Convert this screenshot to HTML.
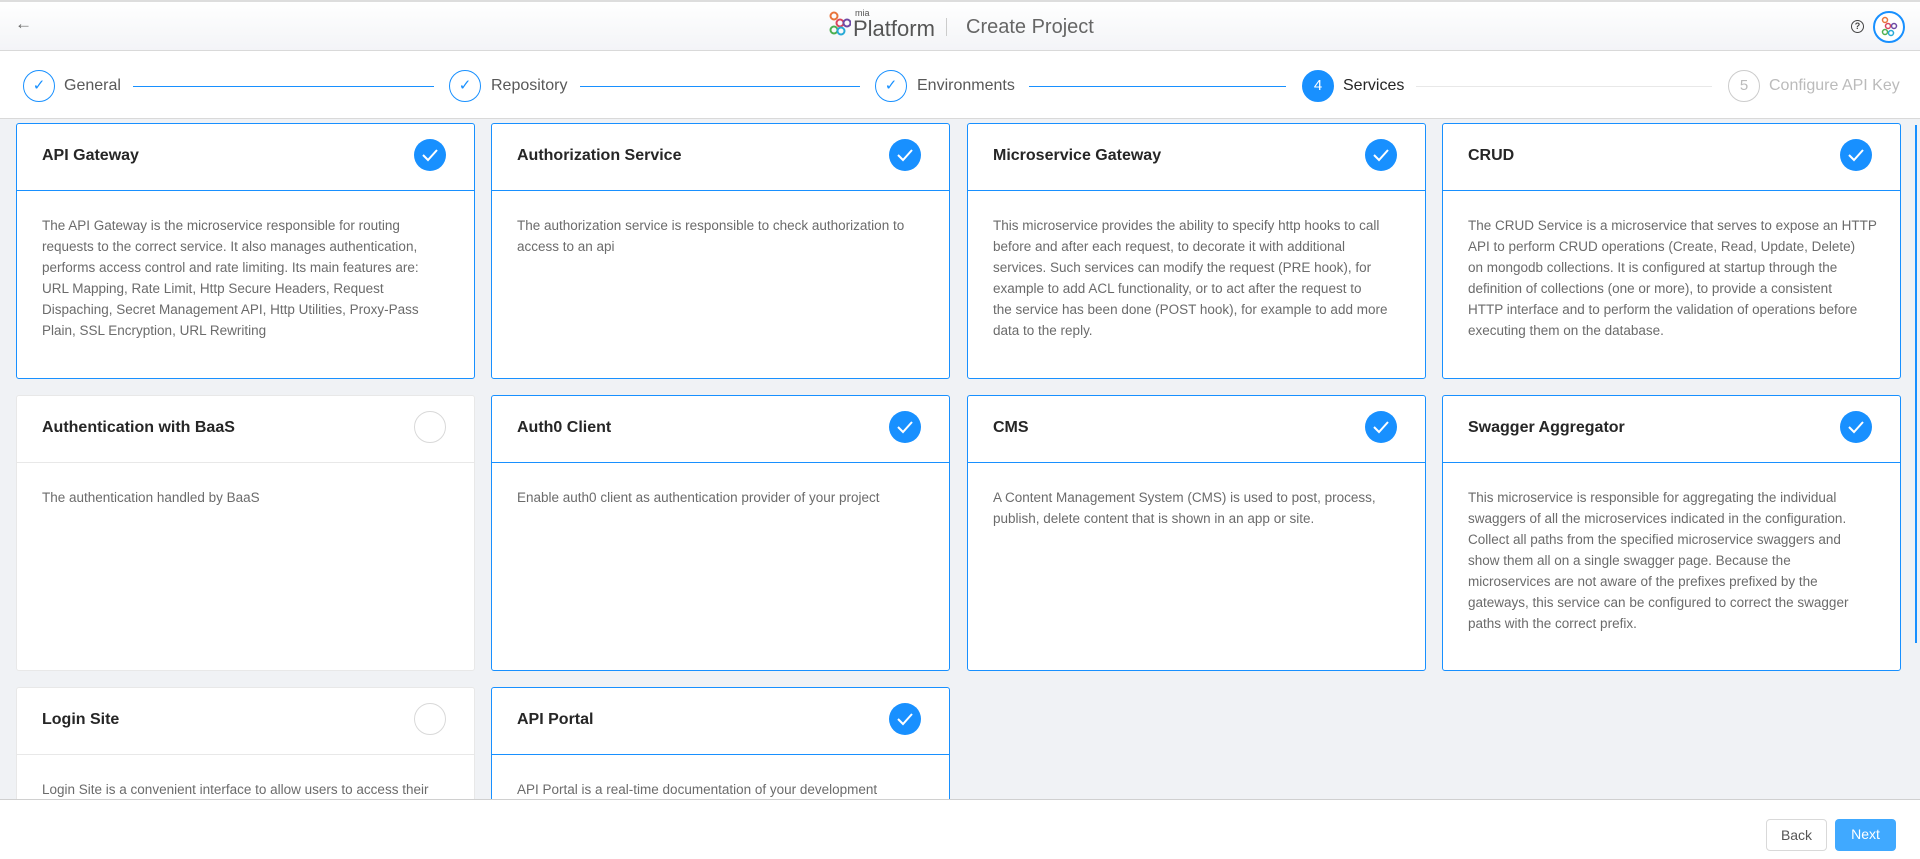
<!DOCTYPE html>
<html style="overflow:hidden;width:1920px;height:859px"><head><meta charset="utf-8"><style>
*{box-sizing:border-box;margin:0;padding:0}
body{width:1920px;height:859px;overflow:hidden;background:#f0f2f5;font-family:"Liberation Sans",sans-serif;position:relative}
.top{position:absolute;left:0;top:0;width:1920px;height:51px;background:linear-gradient(#fff,#f3f4f7);border-top:2px solid #ddd;border-bottom:1px solid #d9d9d9}
.steps{position:absolute;left:0;top:51px;width:1920px;height:68px;background:#fff;border-bottom:1px solid #d9d9d9}
.circ{position:absolute;width:32px;height:32px;border-radius:50%;border:1.5px solid #1890ff;top:19px;color:#1890ff;text-align:center;line-height:29px;font-size:15px}
.lbl{position:absolute;top:26px;font-size:16px;color:#595959}
.ln{position:absolute;top:35px;height:1px;background:#1890ff}
.clip{position:absolute;left:0;top:119px;width:1920px;height:680px;overflow:hidden}
.card{position:absolute;width:459px;background:#fff;border:1px solid #1890ff;border-radius:3px;overflow:hidden}
.card.off{border-color:#e8e8e8}
.hd{height:67px;border-bottom:1px solid #1890ff;position:relative;padding:23px 0 0 25px;font-size:16px;color:#262626;font-weight:bold}
.off .hd{border-bottom-color:#e8e8e8}
.ck{position:absolute;right:28px;top:15px;width:32px;height:32px;border-radius:50%;background:#1890ff}
.ck svg{position:absolute;left:7px;top:8px}
.off .ck{background:#fff;border:1px solid #d9d9d9}
.bd{padding:24px 25px;font-size:13.5px;line-height:21px;color:#6b6b6b;white-space:nowrap}
.foot{position:absolute;left:0;top:799px;width:1920px;height:60px;background:#fff;border-top:1px solid #d0d0d0;z-index:5}
.btn{position:absolute;top:19px;height:32px;border-radius:4px;font-size:14px;text-align:center;line-height:30px}
</style></head><body>
<div class="top">
 <div style="position:absolute;left:15px;top:12px;font-size:17px;color:#666">&#8592;</div>
 <svg style="position:absolute;left:829px;top:9px" width="22" height="26" viewBox="0 0 22 26"><circle cx="5" cy="5" r="3.5" fill="none" stroke="#e8743b" stroke-width="2"/><circle cx="11" cy="12" r="3.5" fill="none" stroke="#d9455f" stroke-width="2"/><circle cx="18" cy="12" r="3.5" fill="none" stroke="#6d4aa5" stroke-width="2"/><circle cx="5" cy="19" r="3.5" fill="none" stroke="#4caf50" stroke-width="2"/><circle cx="12" cy="20" r="3.5" fill="none" stroke="#26a9d6" stroke-width="2"/></svg>
 <div style="position:absolute;left:855px;top:6px;font-size:9px;color:#555">mia</div>
 <div style="position:absolute;left:853px;top:14px;font-size:22px;color:#555">Platform</div>
 <div style="position:absolute;left:946px;top:16px;width:1px;height:18px;background:#ccc"></div>
 <div style="position:absolute;left:966px;top:14px;font-size:20px;color:#666">Create Project</div>
 <div style="position:absolute;left:1851px;top:18px;width:13px;height:13px;border:1.5px solid #444;border-radius:50%;font-size:9px;text-align:center;line-height:10px;color:#444;font-weight:bold">?</div>
 <svg style="position:absolute;left:1873px;top:9px" width="32" height="32" viewBox="0 0 32 32"><circle cx="16" cy="16" r="15" fill="#fff" stroke="#1890ff" stroke-width="2"/><circle cx="12" cy="9" r="2.5" fill="none" stroke="#e8743b" stroke-width="1.5"/><circle cx="15" cy="15" r="2.5" fill="none" stroke="#d9455f" stroke-width="1.5"/><circle cx="21" cy="15" r="2.5" fill="none" stroke="#6d4aa5" stroke-width="1.5"/><circle cx="12" cy="21" r="2.5" fill="none" stroke="#4caf50" stroke-width="1.5"/><circle cx="18" cy="22" r="2.5" fill="none" stroke="#26a9d6" stroke-width="1.5"/></svg>
</div>
<div class="steps">
 <div class="circ" style="left:23px">&#10003;</div><div class="lbl" style="left:64px">General</div><div class="ln" style="left:133px;width:301px"></div>
 <div class="circ" style="left:449px">&#10003;</div><div class="lbl" style="left:491px">Repository</div><div class="ln" style="left:580px;width:280px"></div>
 <div class="circ" style="left:875px">&#10003;</div><div class="lbl" style="left:917px">Environments</div><div class="ln" style="left:1029px;width:257px"></div>
 <div class="circ" style="left:1302px;background:#1890ff;color:#fff">4</div><div class="lbl" style="left:1343px;color:#262626">Services</div><div class="ln" style="left:1416px;width:296px;background:#e8e8e8"></div>
 <div class="circ" style="left:1728px;border-color:#ccc;color:#bbb">5</div><div class="lbl" style="left:1769px;color:#bbb">Configure API Key</div>
</div>

<div class="clip">
<div class="card" style="left:16px;top:4px;height:256px"><div class="hd">API Gateway<div class="ck"><svg width="18" height="16"><path d="M2 8l5 5 9-10" fill="none" stroke="#fff" stroke-width="2"/></svg></div></div><div class="bd">The API Gateway is the microservice responsible for routing<br>requests to the correct service. It also manages authentication,<br>performs access control and rate limiting. Its main features are:<br>URL Mapping, Rate Limit, Http Secure Headers, Request<br>Dispaching, Secret Management API, Http Utilities, Proxy-Pass<br>Plain, SSL Encryption, URL Rewriting</div></div>
<div class="card" style="left:491px;top:4px;height:256px"><div class="hd">Authorization Service<div class="ck"><svg width="18" height="16"><path d="M2 8l5 5 9-10" fill="none" stroke="#fff" stroke-width="2"/></svg></div></div><div class="bd">The authorization service is responsible to check authorization to<br>access to an api</div></div>
<div class="card" style="left:967px;top:4px;height:256px"><div class="hd">Microservice Gateway<div class="ck"><svg width="18" height="16"><path d="M2 8l5 5 9-10" fill="none" stroke="#fff" stroke-width="2"/></svg></div></div><div class="bd">This microservice provides the ability to specify http hooks to call<br>before and after each request, to decorate it with additional<br>services. Such services can modify the request (PRE hook), for<br>example to add ACL functionality, or to act after the request to<br>the service has been done (POST hook), for example to add more<br>data to the reply.</div></div>
<div class="card" style="left:1442px;top:4px;height:256px"><div class="hd">CRUD<div class="ck"><svg width="18" height="16"><path d="M2 8l5 5 9-10" fill="none" stroke="#fff" stroke-width="2"/></svg></div></div><div class="bd">The CRUD Service is a microservice that serves to expose an HTTP<br>API to perform CRUD operations (Create, Read, Update, Delete)<br>on mongodb collections. It is configured at startup through the<br>definition of collections (one or more), to provide a consistent<br>HTTP interface and to perform the validation of operations before<br>executing them on the database.</div></div>

<div class="card off" style="left:16px;top:276px;height:276px"><div class="hd">Authentication with BaaS<div class="ck"></div></div><div class="bd">The authentication handled by BaaS</div></div>
<div class="card" style="left:491px;top:276px;height:276px"><div class="hd">Auth0 Client<div class="ck"><svg width="18" height="16"><path d="M2 8l5 5 9-10" fill="none" stroke="#fff" stroke-width="2"/></svg></div></div><div class="bd">Enable auth0 client as authentication provider of your project</div></div>
<div class="card" style="left:967px;top:276px;height:276px"><div class="hd">CMS<div class="ck"><svg width="18" height="16"><path d="M2 8l5 5 9-10" fill="none" stroke="#fff" stroke-width="2"/></svg></div></div><div class="bd">A Content Management System (CMS) is used to post, process,<br>publish, delete content that is shown in an app or site.</div></div>
<div class="card" style="left:1442px;top:276px;height:276px"><div class="hd">Swagger Aggregator<div class="ck"><svg width="18" height="16"><path d="M2 8l5 5 9-10" fill="none" stroke="#fff" stroke-width="2"/></svg></div></div><div class="bd">This microservice is responsible for aggregating the individual<br>swaggers of all the microservices indicated in the configuration.<br>Collect all paths from the specified microservice swaggers and<br>show them all on a single swagger page. Because the<br>microservices are not aware of the prefixes prefixed by the<br>gateways, this service can be configured to correct the swagger<br>paths with the correct prefix.</div></div>

<div class="card off" style="left:16px;top:568px;height:200px"><div class="hd">Login Site<div class="ck"></div></div><div class="bd">Login Site is a convenient interface to allow users to access their</div></div>
<div class="card" style="left:491px;top:568px;height:200px"><div class="hd">API Portal<div class="ck"><svg width="18" height="16"><path d="M2 8l5 5 9-10" fill="none" stroke="#fff" stroke-width="2"/></svg></div></div><div class="bd">API Portal is a real-time documentation of your development</div></div>
</div>

<div style="position:absolute;left:1915px;top:125px;width:2px;height:518px;background:#1890ff"></div>
<div class="foot">
 <div class="btn" style="left:1766px;width:61px;border:1px solid #d9d9d9;color:#555">Back</div>
 <div class="btn" style="left:1835px;width:61px;background:#40a9ff;color:#fff">Next</div>
</div>
</body></html>
